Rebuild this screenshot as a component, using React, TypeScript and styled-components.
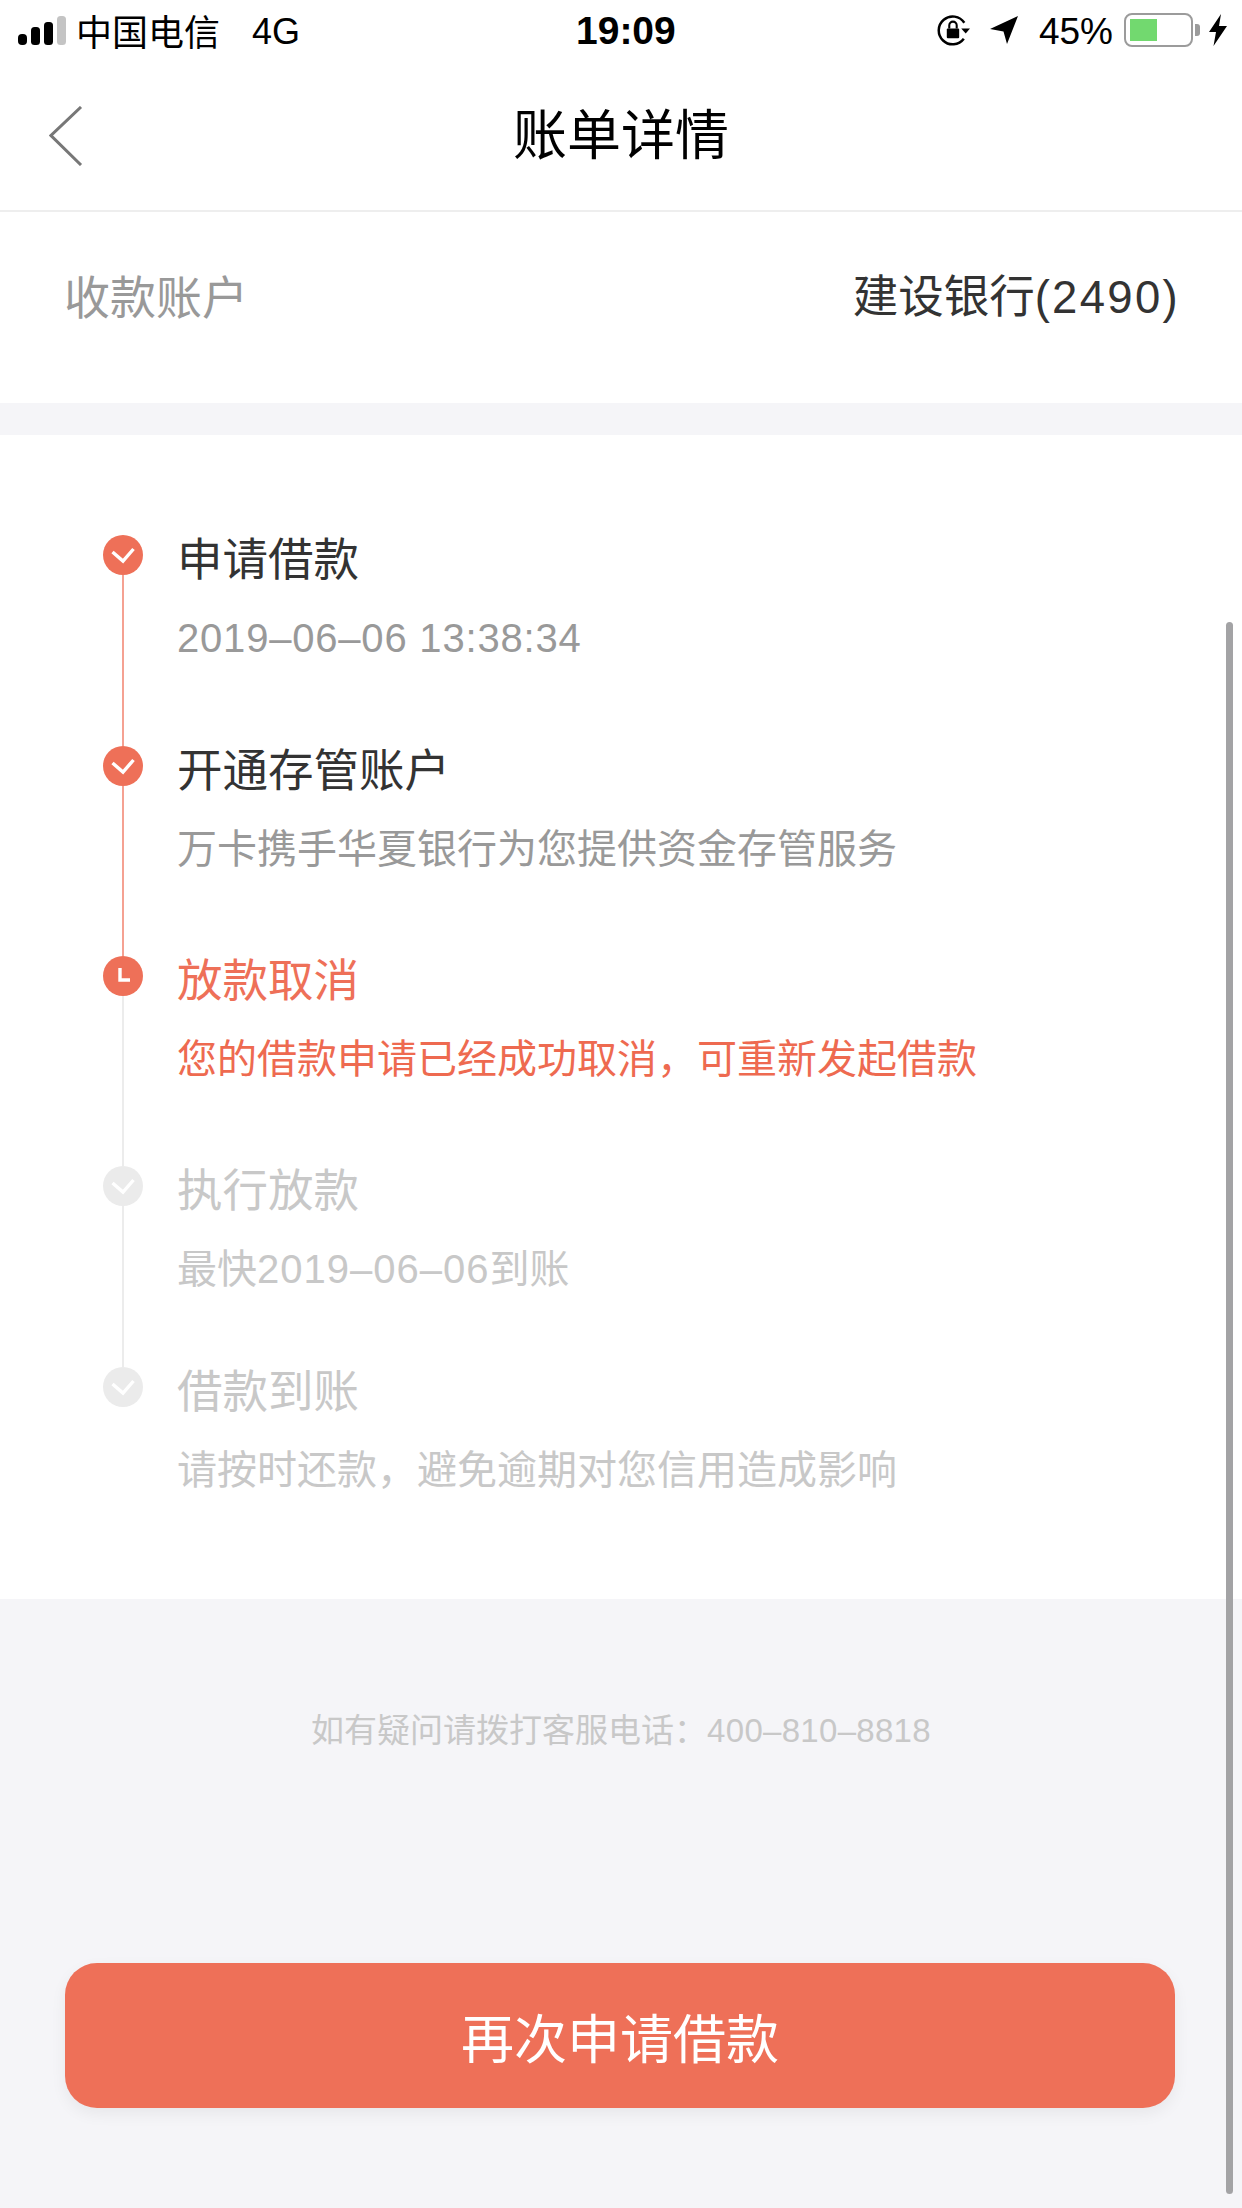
import type { ReactNode } from 'react'
import styled, { createGlobalStyle } from 'styled-components'

const GlobalStyle = createGlobalStyle`
  html, body {
    margin: 0;
    padding: 0;
    background: #f5f5f8;
  }
  * {
    box-sizing: border-box;
  }
`

const FONT = `"Liberation Sans", "Noto Sans CJK SC", sans-serif`

type StepState = 'done' | 'current' | 'todo'

const Num = styled.span<{ spacing?: number }>`
  letter-spacing: ${(p) => p.spacing ?? 0.8}px;
`

const steps: { title: string; sub: ReactNode; state: StepState; height: number; line: StepState | null }[] = [
  { title: '申请借款', sub: <Num>2019–06–06 13:38:34</Num>, state: 'done', height: 211, line: 'done' },
  { title: '开通存管账户', sub: '万卡携手华夏银行为您提供资金存管服务', state: 'done', height: 210, line: 'done' },
  { title: '放款取消', sub: '您的借款申请已经成功取消，可重新发起借款', state: 'current', height: 210, line: 'todo' },
  { title: '执行放款', sub: <>最快<Num spacing={1}>2019–06–06</Num>到账</>, state: 'todo', height: 201, line: 'todo' },
  { title: '借款到账', sub: '请按时还款，避免逾期对您信用造成影响', state: 'todo', height: 211, line: null },
]

const SignalIcon = () => (
  <svg width="48" height="29" viewBox="0 0 48 29">
    <rect x="0" y="18" width="9" height="11" rx="4" fill="#000" />
    <rect x="13" y="11" width="9" height="18" rx="3.5" fill="#000" />
    <rect x="26" y="6" width="9" height="23" rx="3.5" fill="#000" />
    <rect x="39" y="0" width="9" height="29" rx="3.5" fill="#c4c4c4" />
  </svg>
)

const LockIcon = () => (
  <svg width="35" height="32" viewBox="0 0 33 31">
    <path d="M26.5 24A13.5 13.5 0 1 1 27 8.5" fill="none" stroke="#000" strokeWidth="2.4" />
    <path d="M24 14h8.500l-4.200 5z" fill="#000" />
    <rect x="10" y="14" width="12" height="9.500" rx="1" fill="#000" />
    <path d="M12.400 14v-3a3.600 3.600 0 0 1 7.200 0v3" fill="none" stroke="#000" strokeWidth="2" />
  </svg>
)

const ArrowIcon = () => (
  <svg width="28" height="28" viewBox="0 0 28 28">
    <path d="M28 0L17 28 13.500 15.500 0 13z" fill="#000" />
  </svg>
)

const BoltIcon = () => (
  <svg width="18" height="32" viewBox="0 0 18 32">
    <path d="M12 0L0 18h7L4.500 32 18 12h-8z" fill="#000" />
  </svg>
)

const BackIcon = () => (
  <svg width="34" height="60" viewBox="0 0 34 60">
    <path d="M32 1L2 29.500 32 59" fill="none" stroke="#777" strokeWidth="3" />
  </svg>
)

const StepIcon = ({ state }: { state: StepState }) => (
  <Dot state={state}>
    <svg width="40" height="40" viewBox="0 0 40 40">
      {state === 'current' ? (
        <path d="M17 12v12h10" fill="none" stroke="#fff" strokeWidth="3.400" />
      ) : (
        <path d="M9.500 17l10.500 9 10.500-12" fill="none" stroke="#fff" strokeWidth="3.400" />
      )}
    </svg>
  </Dot>
)

export default function App() {
  return (
    <Page>
      <GlobalStyle />
      <StatusBar>
        <StatusLeft>
          <SignalIcon />
          <Carrier>中国电信</Carrier>
          <Network>4G</Network>
        </StatusLeft>
        <Clock>19:09</Clock>
        <StatusRight>
          <LockIcon />
          <Arrow>
            <ArrowIcon />
          </Arrow>
          <Percent>45%</Percent>
          <Battery>
            <BatteryFill />
          </Battery>
          <BatteryNub />
          <BoltIcon />
        </StatusRight>
      </StatusBar>
      <NavBar>
        <BackButton>
          <BackIcon />
        </BackButton>
        <NavTitle>账单详情</NavTitle>
      </NavBar>
      <AccountRow>
        <AccountLabel>收款账户</AccountLabel>
        <AccountValue>
          建设银行<Num spacing={2.3}>(2490)</Num>
        </AccountValue>
      </AccountRow>
      <Timeline>
        {steps.map((step) => (
          <Step key={step.title} height={step.height}>
            {step.line && <Line state={step.line} />}
            <StepIcon state={step.state} />
            <StepText>
              <StepTitle state={step.state}>{step.title}</StepTitle>
              <StepSub state={step.state}>{step.sub}</StepSub>
            </StepText>
          </Step>
        ))}
      </Timeline>
      <Help>
        如有疑问请拨打客服电话：<Num spacing={0.3}>400–810–8818</Num>
      </Help>
      <Footer>
        <ApplyButton>再次申请借款</ApplyButton>
      </Footer>
      <ScrollThumb />
    </Page>
  )
}

const Page = styled.div`
  position: relative;
  width: 1242px;
  height: 2208px;
  overflow: hidden;
  background: #f5f5f8;
  font-family: ${FONT};
`

const StatusBar = styled.div`
  display: flex;
  align-items: center;
  justify-content: space-between;
  position: relative;
  height: 60px;
  padding: 0 15px 0 18px;
  background: #fff;
  color: #000;
  font-size: 36px;
`

const StatusLeft = styled.div`
  display: flex;
  align-items: center;
`

const Carrier = styled.span`
  margin-left: 10px;
`

const Network = styled.span`
  margin-left: 32px;
  padding-top: 3px;
`

const Clock = styled.span`
  position: absolute;
  left: 576px;
  top: 11px;
  font-size: 39px;
  font-weight: 700;
  line-height: 40px;
`

const StatusRight = styled.div`
  display: flex;
  align-items: center;
`

const Arrow = styled.div`
  display: flex;
  margin-left: 19px;
`

const Percent = styled.span`
  margin: 0 11px 0 21px;
  padding-top: 3px;
  font-size: 37px;
`

const Battery = styled.div`
  width: 69px;
  height: 34px;
  padding: 4px;
  border: 2px solid #9b9b9b;
  border-radius: 8px;
`

const BatteryFill = styled.div`
  width: 27px;
  height: 22px;
  background: #72d96f;
`

const BatteryNub = styled.div`
  width: 5px;
  height: 12px;
  margin: 0 9px 0 2px;
  border-radius: 0 3px 3px 0;
  background: #9b9b9b;
`

const NavBar = styled.div`
  position: relative;
  display: flex;
  align-items: center;
  justify-content: center;
  height: 152px;
  padding-top: 2px;
  border-bottom: 2px solid #eeeeee;
  background: #fff;
`

const BackButton = styled.div`
  position: absolute;
  left: 49px;
  top: 46px;
  display: flex;
`

const NavTitle = styled.div`
  font-size: 54px;
  line-height: 70px;
  color: #000;
`

const AccountRow = styled.div`
  display: flex;
  justify-content: space-between;
  height: 191px;
  padding: 55px 62px 0 64px;
  background: #fff;
  line-height: 62px;
`

const AccountLabel = styled.span`
  color: #999;
  font-size: 46px;
`

const AccountValue = styled.span`
  color: #333;
  font-size: 45.5px;
`

const Timeline = styled.div`
  margin-top: 32px;
  height: 1164px;
  padding: 100px 0 0 103px;
  background: #fff;
`

const Step = styled.div<{ height: number }>`
  position: relative;
  display: flex;
  align-items: flex-start;
  gap: 38px;
  height: ${(p) => p.height}px;
`

const Line = styled.div<{ state: StepState }>`
  position: absolute;
  left: 19px;
  top: 40px;
  bottom: 0;
  width: 2px;
  background: ${(p) => (p.state === 'done' ? '#f5a192' : '#ececec')};
`

const Dot = styled.div<{ state: StepState }>`
  flex: none;
  width: 40px;
  height: 40px;
  border-radius: 50%;
  background: ${(p) => (p.state === 'todo' ? '#ebebeb' : '#ee7058')};

  svg {
    display: block;
  }
`

const titleColor = { done: '#333', current: '#ee7058', todo: '#c8c8c8' }
const subColor = { done: '#999', current: '#ee6a50', todo: '#c8c8c8' }

const StepText = styled.div`
  display: flex;
  flex-direction: column;
  margin: -5px 0 0 -4px;
`

const StepTitle = styled.div<{ state: StepState }>`
  font-size: 45.5px;
  line-height: 62px;
  color: ${(p) => titleColor[p.state]};
`

const StepSub = styled.div<{ state: StepState }>`
  margin-top: 18px;
  font-size: 40px;
  line-height: 56px;
  color: ${(p) => subColor[p.state]};
`

const Help = styled.div`
  margin-top: 109px;
  text-align: center;
  font-size: 33px;
  line-height: 46px;
  color: #c8c8c8;
`

const Footer = styled.div`
  margin-top: 209px;
  padding: 0 67px 0 65px;
`

const ApplyButton = styled.div`
  display: flex;
  align-items: center;
  justify-content: center;
  height: 145px;
  border-radius: 32px;
  background: #ee7058;
  box-shadow: 0 6px 16px rgba(0, 0, 0, 0.06);
  color: #fff;
  font-size: 53px;
`

const ScrollThumb = styled.div`
  position: absolute;
  left: 1226px;
  top: 622px;
  width: 7px;
  height: 1572px;
  border-radius: 4px;
  background: #a3a3a5;
`
